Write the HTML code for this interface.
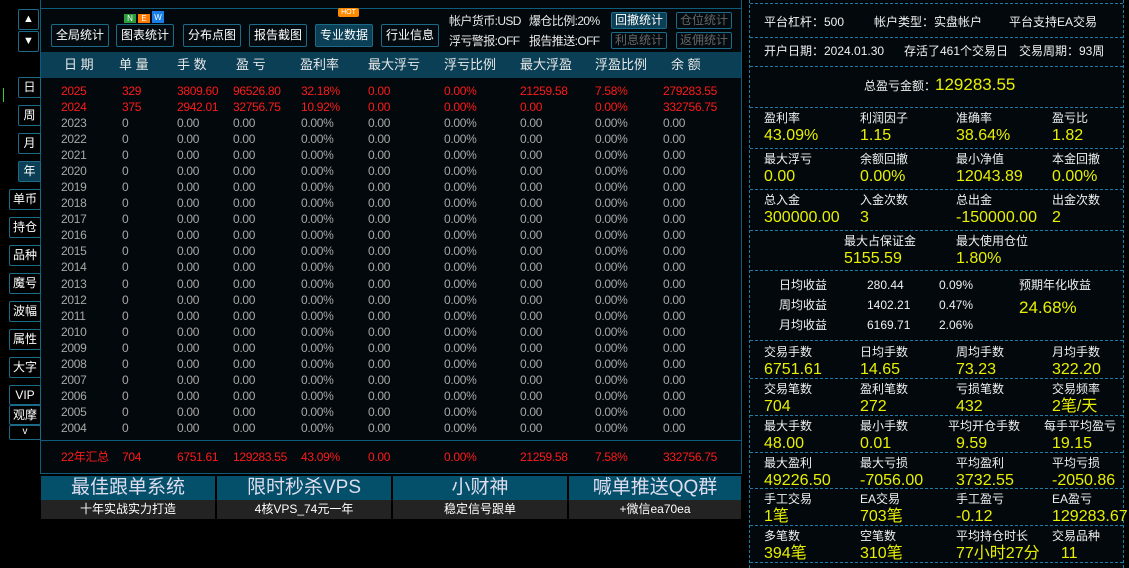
<!DOCTYPE html>
<html><head><meta charset="utf-8"><style>
*{margin:0;padding:0;box-sizing:border-box}
body{width:1129px;height:568px;background:#000;position:relative;overflow:hidden;font-family:"Liberation Sans","Noto Sans CJK SC",sans-serif;color:#e8e8e8;font-size:12px;line-height:14px}
.a{position:absolute;white-space:nowrap}
.btn{position:absolute;border:1px solid #1a6a88;background:#030b10;color:#fff;font-size:12px;text-align:center;border-radius:2px}
.sb{position:absolute;border:1px solid #1a6a88;background:#000;color:#fff;text-align:center;font-size:12px;border-radius:2px}
.r{color:#ff1a1a;letter-spacing:-0.3px}.g{color:#a8a8a8;letter-spacing:-0.3px}
.dl{position:absolute;left:750px;width:373px;border-top:1px dashed #1a7ea6;height:0}
.lb{position:absolute;font-size:12px;line-height:14px;color:#f0f0f0;white-space:nowrap}
.v{position:absolute;font-size:16px;line-height:18px;height:18px;color:#e8f000;white-space:nowrap}
.tb{letter-spacing:-0.6px}
</style></head><body>
<div class="a" style="left:40px;top:0;width:702px;height:11px;border:1px solid #0e5c7a;border-top:none;background:#02080c"></div>
<div class="a" style="left:40px;top:8px;width:702px;height:466px;border:1px solid #0e5c7a;background:#02080c"></div>
<div class="a" style="left:41px;top:52px;width:700px;height:26px;background:#0b3f55"></div>
<div class="a" style="left:41px;top:440px;width:700px;height:1px;background:#0e5c7a"></div>
<div class="sb" style="left:18px;top:9px;width:21px;height:21px;font-size:11px;line-height:19px">▲</div>
<div class="sb" style="left:18px;top:31px;width:21px;height:21px;font-size:11px;line-height:19px">▼</div>
<div class="btn" style="left:51px;top:24px;width:58px;height:23px;line-height:21px">全局统计</div>
<div class="btn" style="left:116px;top:24px;width:58px;height:23px;line-height:21px">图表统计</div>
<div class="btn" style="left:183px;top:24px;width:58px;height:23px;line-height:21px">分布点图</div>
<div class="btn" style="left:249px;top:24px;width:58px;height:23px;line-height:21px">报告截图</div>
<div class="btn" style="left:315px;top:24px;width:58px;height:23px;line-height:21px;background:#0b3f55">专业数据</div>
<div class="btn" style="left:381px;top:24px;width:58px;height:23px;line-height:21px">行业信息</div>
<div class="a" style="left:124px;top:14px;width:12px;height:9px;background:#2a9a3a;color:#fff;font-size:8px;text-align:center;line-height:9px">N</div>
<div class="a" style="left:138px;top:14px;width:12px;height:9px;background:#ff7a00;color:#fff;font-size:8px;text-align:center;line-height:9px">E</div>
<div class="a" style="left:152px;top:11px;width:12px;height:12px;background:#1a7ee8;color:#fff;font-size:8px;text-align:center;line-height:14px">W</div>
<div class="a" style="left:338px;top:8px;width:21px;height:9px;background:#ff8a00;color:#fff;font-size:7px;text-align:center;line-height:9px;border-radius:2px">HOT</div>
<div class="a tb" style="left:449px;top:14px">帐户货币:USD</div>
<div class="a tb" style="left:529px;top:14px">爆仓比例:20%</div>
<div class="a tb" style="left:449px;top:34px">浮亏警报:OFF</div>
<div class="a tb" style="left:529px;top:34px">报告推送:OFF</div>
<div class="btn" style="left:611px;top:12px;width:56px;height:17px;line-height:15px;background:#0b3f55">回撤统计</div>
<div class="btn" style="left:676px;top:12px;width:56px;height:17px;line-height:15px;color:#666">仓位统计</div>
<div class="btn" style="left:611px;top:32px;width:56px;height:17px;line-height:15px;color:#666">利息统计</div>
<div class="btn" style="left:676px;top:32px;width:56px;height:17px;line-height:15px;color:#666">返佣统计</div>
<div class="a" style="left:64px;top:58px;font-size:13px">日 期</div>
<div class="a" style="left:119px;top:58px;font-size:13px">单 量</div>
<div class="a" style="left:177px;top:58px;font-size:13px">手 数</div>
<div class="a" style="left:236px;top:58px;font-size:13px">盈 亏</div>
<div class="a" style="left:300px;top:58px;font-size:13px">盈利率</div>
<div class="a" style="left:368px;top:58px;font-size:13px">最大浮亏</div>
<div class="a" style="left:444px;top:58px;font-size:13px">浮亏比例</div>
<div class="a" style="left:520px;top:58px;font-size:13px">最大浮盈</div>
<div class="a" style="left:595px;top:58px;font-size:13px">浮盈比例</div>
<div class="a" style="left:671px;top:58px;font-size:13px">余 额</div>
<div id="rows"></div>
<div class="sb" style="left:18px;top:77px;width:23px;height:21px;line-height:19px">日</div>
<div class="sb" style="left:18px;top:105px;width:23px;height:21px;line-height:19px">周</div>
<div class="sb" style="left:18px;top:133px;width:23px;height:21px;line-height:19px">月</div>
<div class="sb" style="left:18px;top:161px;width:23px;height:21px;line-height:19px;background:#0b3f55">年</div>
<div class="sb" style="left:9px;top:189px;width:32px;height:21px;line-height:19px">单币</div>
<div class="sb" style="left:9px;top:217px;width:32px;height:21px;line-height:19px">持仓</div>
<div class="sb" style="left:9px;top:245px;width:32px;height:21px;line-height:19px">品种</div>
<div class="sb" style="left:9px;top:273px;width:32px;height:21px;line-height:19px">魔号</div>
<div class="sb" style="left:9px;top:301px;width:32px;height:21px;line-height:19px">波幅</div>
<div class="sb" style="left:9px;top:329px;width:32px;height:21px;line-height:19px">属性</div>
<div class="sb" style="left:9px;top:357px;width:32px;height:21px;line-height:19px">大字</div>
<div class="sb" style="left:9px;top:385px;width:32px;height:20px;line-height:18px">VIP</div>
<div class="sb" style="left:9px;top:405px;width:32px;height:20px;line-height:18px">观摩</div>
<div class="sb" style="left:9px;top:425px;width:32px;height:15px;line-height:12px;font-size:10px">v</div>
<div class="a" style="left:3px;top:88px;width:1px;height:14px;background:#3c3"></div>
<div class="a" style="left:41px;top:476px;width:174px;height:24px;background:#04506a;color:#dde;font-size:19px;text-align:center;line-height:24px">最佳跟单系统</div>
<div class="a" style="left:41px;top:500px;width:174px;height:19px;background:#232323;color:#fff;font-size:12px;text-align:center;line-height:19px">十年实战实力打造</div>
<div class="a" style="left:217px;top:476px;width:174px;height:24px;background:#04506a;color:#dde;font-size:19px;text-align:center;line-height:24px">限时秒杀VPS</div>
<div class="a" style="left:217px;top:500px;width:174px;height:19px;background:#232323;color:#fff;font-size:12px;text-align:center;line-height:19px">4核VPS_74元一年</div>
<div class="a" style="left:393px;top:476px;width:174px;height:24px;background:#04506a;color:#dde;font-size:19px;text-align:center;line-height:24px">小财神</div>
<div class="a" style="left:393px;top:500px;width:174px;height:19px;background:#232323;color:#fff;font-size:12px;text-align:center;line-height:19px">稳定信号跟单</div>
<div class="a" style="left:569px;top:476px;width:172px;height:24px;background:#04506a;color:#dde;font-size:19px;text-align:center;line-height:24px">喊单推送QQ群</div>
<div class="a" style="left:569px;top:500px;width:172px;height:19px;background:#232323;color:#fff;font-size:12px;text-align:center;line-height:19px">+微信ea70ea</div>
<div class="a" style="left:749px;top:0;width:375px;height:568px;background:#02080c;border-left:1px dashed #1a7ea6;border-right:1px dashed #1a7ea6"></div>
<div id="rp"></div>
<script>
var cols=[61,122,177,233,301,368,444,520,595,663];
var h='';
function row(y,vals,cls){for(var i=0;i<10;i++)h+='<div class="a '+cls+'" style="left:'+cols[i]+'px;top:'+y+'px">'+vals[i]+'</div>';}
row(84,['2025','329','3809.60','96526.80','32.18%','0.00','0.00%','21259.58','7.58%','279283.55'],'r');
row(100,['2024','375','2942.01','32756.75','10.92%','0.00','0.00%','0.00','0.00%','332756.75'],'r');
for(var k=0;k<20;k++)row(116+k*16.05,[String(2023-k),'0','0.00','0.00','0.00%','0.00','0.00%','0.00','0.00%','0.00'],'g');
row(450,['22年汇总','704','6751.61','129283.55','43.09%','0.00','0.00%','21259.58','7.58%','332756.75'],'r');
document.getElementById('rows').innerHTML=h;
var r='';
[3,37,66,107,148,189,230,270,340,378,415,452,488,525,562].forEach(function(y){r+='<div class="dl" style="top:'+y+'px"></div>';});
function lb(x,y,t){r+='<div class="lb" style="left:'+x+'px;top:'+y+'px">'+t+'</div>';}
function v(x,y,t,s){r+='<div class="v" style="left:'+x+'px;top:'+y+'px'+(s?';font-size:'+s+'px':'')+'">'+t+'</div>';}
lb(764,15,'平台杠杆：500');lb(874,15,'帐户类型：实盘帐户');lb(1009,15,'平台支持EA交易');
lb(764,44,'开户日期：2024.01.30');lb(904,44,'存活了461个交易日');lb(1019,44,'交易周期：93周');
lb(864,79,'总盈亏金额：');v(935,76,'129283.55',17);
var X=[764,860,956,1052];
function grid(y,L,V,xs,vx){xs=xs||X;vx=vx||xs;for(var i=0;i<L.length;i++){lb(xs[i],y,L[i]);v(vx[i],y+16,V[i]);}}
grid(111,['盈利率','利润因子','准确率','盈亏比'],['43.09%','1.15','38.64%','1.82']);
grid(152,['最大浮亏','余额回撤','最小净值','本金回撤'],['0.00','0.00%','12043.89','0.00%']);
grid(193,['总入金','入金次数','总出金','出金次数'],['300000.00','3','-150000.00','2']);
grid(234,['最大占保证金','最大使用仓位'],['5155.59','1.80%'],[844,956]);
lb(779,278,'日均收益');lb(867,278,'280.44');lb(939,278,'0.09%');
lb(779,298,'周均收益');lb(867,298,'1402.21');lb(939,298,'0.47%');
lb(779,318,'月均收益');lb(867,318,'6169.71');lb(939,318,'2.06%');
lb(1019,278,'预期年化收益');v(1019,299,'24.68%',17);
grid(345,['交易手数','日均手数','周均手数','月均手数'],['6751.61','14.65','73.23','322.20']);
grid(382,['交易笔数','盈利笔数','亏损笔数','交易频率'],['704','272','432','2笔/天']);
grid(419,['最大手数','最小手数','平均开仓手数','每手平均盈亏'],['48.00','0.01','9.59','19.15'],[764,860,948,1044],[764,860,956,1052]);
grid(456,['最大盈利','最大亏损','平均盈利','平均亏损'],['49226.50','-7056.00','3732.55','-2050.86']);
grid(492,['手工交易','EA交易','手工盈亏','EA盈亏'],['1笔','703笔','-0.12','129283.67']);
grid(529,['多笔数','空笔数','平均持仓时长','交易品种'],['394笔','310笔','77小时27分','&nbsp;&nbsp;11']);
document.getElementById('rp').innerHTML=r;
</script>
</body></html>
